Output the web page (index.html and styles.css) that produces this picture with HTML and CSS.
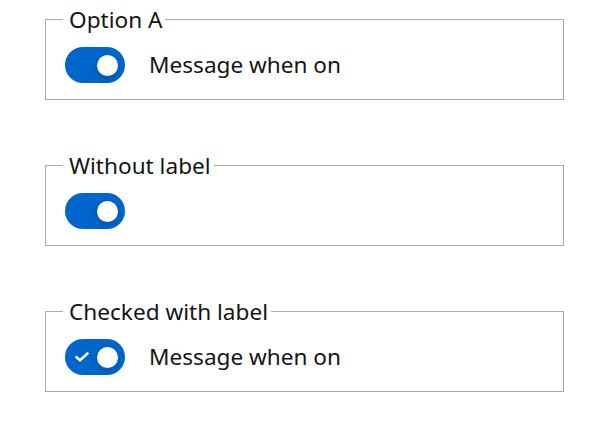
FILE: index.html
```html
<!DOCTYPE html>
<html lang="en">
<head>
<meta charset="utf-8">
<title>Switches</title>
<link rel="stylesheet" href="styles.css">
</head>
<body>
<div class="page">
  <fieldset class="group">
    <legend class="group-legend">Option A</legend>
    <label class="switch">
      <span class="switch-toggle"><span class="switch-knob"></span></span>
      <span class="switch-label">Message when on</span>
    </label>
  </fieldset>
  <fieldset class="group">
    <legend class="group-legend">Without label</legend>
    <label class="switch">
      <span class="switch-toggle"><span class="switch-knob"></span></span>
    </label>
  </fieldset>
  <fieldset class="group">
    <legend class="group-legend">Checked with label</legend>
    <label class="switch">
      <span class="switch-toggle">
        <svg class="switch-check" viewBox="0 0 14 10" width="14" height="10" aria-hidden="true">
          <path d="M1.5 5.2 L5 8.3 L12.5 1.5" fill="none" stroke="#fff" stroke-width="2.6" stroke-linecap="round" stroke-linejoin="round"/>
        </svg>
        <span class="switch-knob"></span>
      </span>
      <span class="switch-label">Message when on</span>
    </label>
  </fieldset>
</div>
</body>
</html>
```
FILE: styles.css
```css
html, body {
  margin: 0;
  padding: 0;
  background: #fff;
}

body {
  font-family: "Noto Sans", "DejaVu Sans", sans-serif;
  color: #151515;
}

.page {
  display: flex;
  flex-direction: column;
  gap: 54px;
  padding: 8px 0 0 45px;
}

.group {
  box-sizing: border-box;
  width: 519px;
  margin: 0;
  min-width: 0;
  padding: 16px 19px 16px 19px;
  border: 1px solid #ababab;
  border-right-color: #a6a6a6;
  border-bottom-color: #a6a6a6;
}

.group-legend {
  margin-left: -2px;
  padding: 0 3px 0 6px;
  font-size: 22.6px;
  line-height: 23px;
  color: #151515;
}

.switch {
  display: flex;
  align-items: center;
  height: 36px;
}

.switch-toggle {
  position: relative;
  display: flex;
  align-items: center;
  box-sizing: border-box;
  width: 60px;
  height: 36px;
  padding: 0 7px 0 10px;
  border-radius: 18px;
  background: #0066cc;
}

.switch-knob {
  width: 21px;
  height: 21px;
  margin-left: auto;
  border-radius: 50%;
  background: #fff;
  box-shadow: 0 6px 12px rgba(3, 3, 3, 0.12), 0 0 6px rgba(3, 3, 3, 0.06);
}

.switch-check {
  display: block;
}

.switch-label {
  margin-left: 24px;
  font-size: 22.6px;
  line-height: 36px;
  color: #151515;
}
```
